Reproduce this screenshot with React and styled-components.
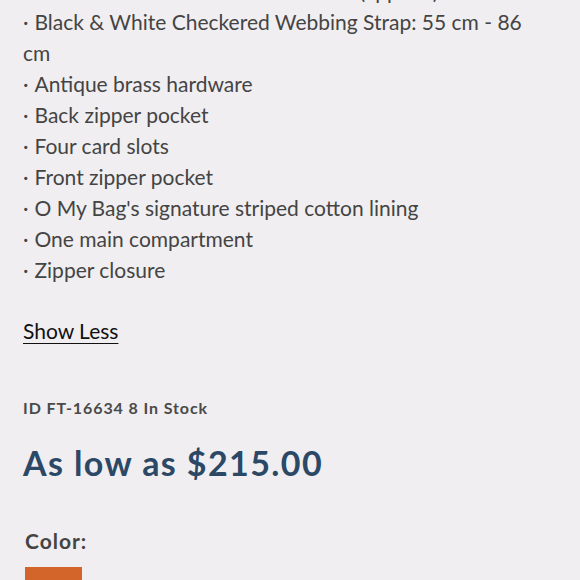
import React from 'react';
import styled, { createGlobalStyle } from 'styled-components';

const GlobalStyle = createGlobalStyle`
  html, body {
    margin: 0;
    padding: 0;
    background: #f0eef0;
  }
  body {
    font-family: Lato, "Noto Sans", sans-serif;
    color: #434343;
  }
`;

const Page = styled.div`
  width: 580px;
  height: 580px;
  overflow: hidden;
  padding: 0 23px;
  box-sizing: border-box;
`;

const FeatureList = styled.ul`
  list-style: none;
  margin: -25px 0 0 0;
  padding: 0;
  max-width: 515px;
  font-size: 21px;
  line-height: 31px;
  color: #444;
`;

const Feature = styled.li`
  &::before {
    content: '·';
    margin-right: 6px;
  }
`;

const ToggleLink = styled.a`
  display: inline-block;
  margin-top: 30px;
  font-size: 21px;
  line-height: 31px;
  color: #111;
  text-decoration: underline;
  text-underline-offset: 4px;
  text-decoration-thickness: 1px;
`;

const StockLine = styled.div`
  margin-top: 52px;
  font-size: 16px;
  font-weight: 700;
  letter-spacing: 0.9px;
  color: #4a4a4a;
`;

const Price = styled.div`
  margin-top: 25px;
  font-size: 34px;
  font-weight: 700;
  letter-spacing: 1.4px;
  color: #2b4866;
`;

const ColorLabel = styled.div`
  margin-top: 45px;
  margin-left: 2px;
  font-size: 21px;
  font-weight: 700;
  letter-spacing: 1px;
  color: #444;
`;

const Swatch = styled.div`
  margin: 14px 0 0 2px;
  width: 57px;
  height: 40px;
  background: ${(p) => p.color};
`;

const features = [
  'Dimensions: 22 cm x 16 cm x 7 cm (approx.)',
  'Black & White Checkered Webbing Strap: 55 cm - 86 cm',
  'Antique brass hardware',
  'Back zipper pocket',
  'Four card slots',
  'Front zipper pocket',
  "O My Bag's signature striped cotton lining",
  'One main compartment',
  'Zipper closure',
];

export default function App() {
  return (
    <>
      <GlobalStyle />
      <Page>
        <FeatureList>
          {features.map((f) => (
            <Feature key={f}>{f}</Feature>
          ))}
        </FeatureList>
        <ToggleLink href="#">Show Less</ToggleLink>
        <StockLine>ID FT-16634 8 In Stock</StockLine>
        <Price>As low as $215.00</Price>
        <ColorLabel>Color:</ColorLabel>
        <Swatch color="#d4652a" />
      </Page>
    </>
  );
}
